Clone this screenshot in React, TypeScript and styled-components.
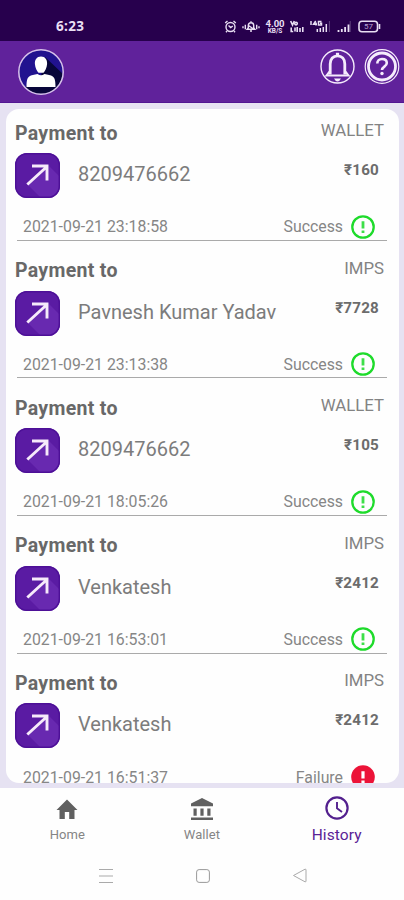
import React from 'react';
import styled, { createGlobalStyle } from 'styled-components';

const GlobalStyle = createGlobalStyle`
  * { box-sizing: border-box; }
  body { margin: 0; background: #fff; font-family: Roboto, "Noto Sans", sans-serif; overflow: hidden; }
  svg { display: block; flex: none; }
`;

const Screen = styled.div`
  width: 404px;
  height: 900px;
  display: flex;
  flex-direction: column;
  background: #fefefe;
  overflow: hidden;
`;

const StatusBar = styled.div`
  height: 41px;
  flex: none;
  display: flex;
  justify-content: space-between;
  padding: 17px 23px 0 56px;
  background: #27004d;
  color: #e9dff3;
`;

const Clock = styled.span`
  font: 700 13.5px/19px "Open Sans", sans-serif;
  letter-spacing: 0.3px;
`;

const StatusIcons = styled.div`
  display: flex;
  align-items: center;
  height: 19px;
`;

const StatusItem = styled.div<{ $gap?: number; $width: number }>`
  width: ${p => p.$width}px;
  margin-left: ${p => p.$gap ?? 0}px;
  flex: none;
`;

const Speed = styled(StatusItem)`
  display: flex;
  flex-direction: column;
  align-items: center;
  font: 700 9.5px/8px Roboto, sans-serif;
`;

const SpeedUnit = styled.span`
  font-size: 6.5px;
  line-height: 6px;
`;

const AppBar = styled.header`
  height: 62px;
  flex: none;
  display: flex;
  justify-content: space-between;
  padding: 7px 4px 0 17px;
  background: #60229b;
  border-bottom: 1px solid #521692;
`;

const BarActions = styled.div`
  display: flex;
  gap: 9px;
`;

const Body = styled.main`
  height: 685px;
  flex: none;
  padding: 6px 5px 5px 6px;
  background: #e6e2f2;
`;

const Card = styled.section`
  height: 674px;
  overflow: hidden;
  border-radius: 13px;
  background: #fefefe;
`;

const Payment = styled.article`
  height: 137.6px;
  display: flex;
  flex-direction: column;
  color: #686868;
`;

const PaymentTop = styled.div`
  height: 104.4px;
  flex: none;
  display: flex;
  justify-content: space-between;
  padding: 11px 15px 0 9px;
`;

const Title = styled.h2`
  margin: 0;
  padding-top: 1.6px;
  font-size: 19.5px;
  line-height: 24px;
  height: 25px;
  font-weight: 700;
  letter-spacing: 0.3px;
  color: #686868;
`;

const Payee = styled.div`
  display: flex;
  align-items: center;
  gap: 18px;
  margin-top: 8px;
  height: 45px;
  white-space: nowrap;
`;

const PayeeName = styled.span`
  padding-bottom: 3px;
  font-size: 20px;
  color: #7c7c7c;
`;

const Amounts = styled.div`
  text-align: right;
`;

const Method = styled.div`
  font-size: 16.8px;
  line-height: 20px;
  color: #838383;
`;

const Amount = styled.div`
  margin: 21px 5px 0 0;
  font-size: 15.2px;
  line-height: 18px;
  font-weight: 700;
  letter-spacing: 0.2px;
  color: #6c6c6c;
`;

const PaymentFoot = styled.div`
  height: 27.5px;
  flex: none;
  display: flex;
  justify-content: space-between;
  align-items: center;
  margin: 0 12px 0 11px;
  padding: 0 12px 0 6px;
  border-bottom: 1.5px solid #aaa;
  font-size: 15.85px;
  color: #868686;
`;

const State = styled.div`
  display: flex;
  align-items: center;
  gap: 8px;
`;

const TabBar = styled.nav`
  height: 63px;
  flex: none;
  display: grid;
  grid-template-columns: repeat(3, 1fr);
`;

const Tab = styled.div<{ $active?: boolean }>`
  display: flex;
  flex-direction: column;
  align-items: center;
  padding-top: ${p => (p.$active ? 8 : 10)}px;
  font-size: ${p => (p.$active ? 15.5 : 13)}px;
  line-height: 18px;
  letter-spacing: 0.1px;
  gap: 6px;
  color: ${p => (p.$active ? '#5a2295' : '#858585')};
`;

const SystemBar = styled.div`
  display: flex;
  align-items: center;
  justify-content: space-between;
  height: 49px;
  padding: 0 97px 0 98px;
`;

const Alarm = () => (
  <svg width="13" height="13" viewBox="0 0 12 13" fill="none" stroke="currentColor" strokeWidth="1.4">
    <circle cx="6" cy="7" r="4.5" /><path d="M.7 3 3 1M11.3 3 9 1M4 5.5l2.2 2L8.3 6M2.5 11l-1 1.3M9.5 11l1 1.3" />
  </svg>
);

const Silent = () => (
  <svg width="18" height="13" viewBox="0 0 18 13" fill="none" stroke="currentColor" strokeWidth="1.4">
    <path d="M5.2 9.2 6.3 7.8V5.500q0-2.700 2.700-2.700t2.700 2.700v2.300l1.100 1.400zM8 11h2M3.300 4.700v4.600M14.700 4.700v4.600M1 6.200v2M17 6.200v2M9 1.200v1.500M6.500 5.500l5 3.500" />
  </svg>
);

const VoLte = () => (
  <svg width="14" height="13" viewBox="0 0 14 13" fill="none" stroke="currentColor" strokeWidth="1.6">
    <path d="m.7 1 1.800 4L4.300 1M7.200 7v5M10 8v4M12.800 7v5M1.200 7.500v4h2M5 7.500v4" /><circle cx="6" cy="3.600" r="1.300" />
  </svg>
);

const MobileData = () => (
  <svg width="20" height="13" viewBox="0 0 20 13" fill="none" stroke="currentColor">
    <path d="M1 1v4M5.700 1 3.500 4.300H7M6 2.500v3M11.500 1.500h-3v3.500h3V3.200H10M7.300 9v3M10.300 8v4M13.300 7v5M16.300 4v8" strokeWidth="1.500" />
    <path d="M19.400 1v11" opacity=".3" />
  </svg>
);

const Signal = () => (
  <svg width="14" height="13" viewBox="0 0 13 13" fill="none" stroke="currentColor" strokeWidth="1.800">
    <path d="M1 10v2M4.300 9v3M7.600 7v5M11 4.500V12" /><path d="M12.700 1v11" strokeWidth="1" opacity=".3" />
  </svg>
);

const BatteryBox = styled(StatusItem)`
  display: grid;
  place-items: center;
  font-size: 8px;
  line-height: 13px;
  color: #b99fd2;
`;

const BatteryShell = styled.svg`
  grid-area: 1 / 1;
  color: #e9dff3;
`;

const BatteryText = styled.span`
  grid-area: 1 / 1;
  padding-right: 2px;
`;

const Battery = () => (
  <BatteryBox $width={23} $gap={7}>
    <BatteryShell width="23" height="13" viewBox="0 0 23 13" fill="none" stroke="currentColor" strokeWidth="1.600">
      <rect x="1" y="1.200" width="18.500" height="10.600" rx="3" /><path d="M21.500 4v5" />
    </BatteryShell>
    <BatteryText>57</BatteryText>
  </BatteryBox>
);

const Avatar = () => (
  <svg width="48" height="48" viewBox="0 0 48 48">
    <defs><clipPath id="avatarDisc"><circle cx="24" cy="24" r="22" /></clipPath></defs>
    <circle cx="24" cy="24" r="22" fill="#21128f" />
    <g clipPath="url(#avatarDisc)"><path d="M28 9 48 28v20H8l1-10 15-10z" fill="#08063a" /></g>
    <circle cx="24" cy="24" r="22.200" fill="none" stroke="#d6c2ea" strokeWidth="1.500" />
    <path d="M24 8.500c4.200 0 6.400 3.200 6.100 7.500-.3 4-2.100 7.200-3.600 8.800h-5c-1.500-1.600-3.300-4.800-3.600-8.800-.3-4.300 1.900-7.500 6.100-7.500z" fill="#fff" />
    <path d="M20.500 26q3.500 2.400 7 0c3.200.8 6.300.9 8.300 2.500 2.200 1.700 2.700 5 2.700 10.500H9.500c0-5.500.5-8.800 2.700-10.500 2-1.600 5.100-1.700 8.300-2.500z" fill="#fff" />
  </svg>
);

const Bell = () => (
  <svg width="35" height="37" viewBox="0 0 35 37" fill="none" stroke="#f5ecfc">
    <circle cx="17.500" cy="18.500" r="16.500" strokeWidth="1.400" />
    <path d="M10.200 26.500V16c0-5 3-8.200 7.300-8.200s7.300 3.200 7.300 8.200v10.500" strokeWidth="2.800" />
    <path d="M9.500 23.500 6.500 27.500h22l-3-4" strokeWidth="2" />
    <path d="M17.500 4.800V8" strokeWidth="3.200" />
    <path d="M14 30.500h7q-1.500 3-3.500 3t-3.500-3z" fill="#f5ecfc" stroke="none" />
  </svg>
);

const Help = () => (
  <svg width="36" height="37" viewBox="0 0 36 37" fill="none" stroke="#f5ecfc">
    <circle cx="18" cy="18.500" r="16.800" strokeWidth="1.200" />
    <circle cx="18" cy="18.500" r="13.500" strokeWidth="2.800" />
    <path d="M13.300 15.500c0-2.800 2-4.500 4.700-4.500 2.800 0 4.800 1.600 4.800 4.100 0 3.600-4.800 3.500-4.800 7" strokeWidth="2.600" />
    <circle cx="18" cy="25.500" r="1.700" fill="#f5ecfc" stroke="none" />
  </svg>
);

const SendIcon = () => (
  <svg width="45" height="45" viewBox="0 0 45 45">
    <rect width="45" height="45" rx="12" fill="#5a1ba3" />
    <path d="M33 12 45 24v9a12 12 0 0 1-12 12H26L12 31z" fill="#6829b0" />
    <rect x=".7" y=".7" width="43.600" height="43.600" rx="11.500" fill="none" stroke="#4d1097" strokeWidth="1.400" />
    <path d="M12.300 31.500 32 13.500M17 13H32v14.500" fill="none" stroke="#f6eafa" strokeWidth="2.900" />
  </svg>
);

const StateIcon = ({ ok }: { ok: boolean }) => (
  <svg width="24" height="24" viewBox="0 0 24 24" fill="none">
    {ok
      ? <circle cx="12" cy="12" r="10.700" stroke="#1edb2b" strokeWidth="2.300" />
      : <circle cx="12" cy="12" r="11.800" fill="#ec1338" />}
    <path d="M12 6.200v7.300M12 15.500v2.400" stroke={ok ? '#3ddf48' : '#fff'} strokeWidth={ok ? 2.8 : 3.2} />
  </svg>
);

const HomeIcon = () => (
  <svg width="22" height="22" viewBox="0 0 22 22" fill="#606060">
    <path d="M11 1.500.5 12h3v9h5.300V14h4.400v7h5.300V12h3z" />
  </svg>
);

const BankIcon = () => (
  <svg width="24" height="22" viewBox="0 0 24 22" fill="#606060">
    <path d="M12 0 1 5.500v2.700h22V5.500zM3.500 10.500h3.200v7.200H3.500zM10.400 10.500h3.200v7.200h-3.200zM17.300 10.500h3.200v7.200h-3.200zM1 19.500h22v3H1z" />
  </svg>
);

const ClockIcon = () => (
  <svg width="24" height="24" viewBox="0 0 24 24" fill="none" stroke="#53208e">
    <circle cx="12" cy="12" r="10.600" strokeWidth="2.200" /><path d="M12 6V12.300l5 3.700" strokeWidth="1.900" />
  </svg>
);

const payments = [
  { name: '8209476662', method: 'WALLET', amount: '₹160', date: '2021-09-21 23:18:58', ok: true },
  { name: 'Pavnesh Kumar Yadav', method: 'IMPS', amount: '₹7728', date: '2021-09-21 23:13:38', ok: true },
  { name: '8209476662', method: 'WALLET', amount: '₹105', date: '2021-09-21 18:05:26', ok: true },
  { name: 'Venkatesh', method: 'IMPS', amount: '₹2412', date: '2021-09-21 16:53:01', ok: true },
  { name: 'Venkatesh', method: 'IMPS', amount: '₹2412', date: '2021-09-21 16:51:37', ok: false },
];

export default function App() {
  return (
    <Screen>
      <GlobalStyle />
      <StatusBar>
        <Clock>6:23</Clock>
        <StatusIcons>
          <StatusItem $width={13}><Alarm /></StatusItem>
          <StatusItem $width={18} $gap={5}><Silent /></StatusItem>
          <Speed $width={20} $gap={5}>4.00<SpeedUnit>KB/S</SpeedUnit></Speed>
          <StatusItem $width={14} $gap={5}><VoLte /></StatusItem>
          <StatusItem $width={20} $gap={6}><MobileData /></StatusItem>
          <StatusItem $width={14} $gap={7}><Signal /></StatusItem>
          <Battery />
        </StatusIcons>
      </StatusBar>
      <AppBar>
        <Avatar />
        <BarActions><Bell /><Help /></BarActions>
      </AppBar>
      <Body>
        <Card>
          {payments.map(p => (
            <Payment key={p.date}>
              <PaymentTop>
                <div>
                  <Title>Payment to</Title>
                  <Payee><SendIcon /><PayeeName>{p.name}</PayeeName></Payee>
                </div>
                <Amounts>
                  <Method>{p.method}</Method>
                  <Amount>{p.amount}</Amount>
                </Amounts>
              </PaymentTop>
              <PaymentFoot>
                <span>{p.date}</span>
                <State>{p.ok ? 'Success' : 'Failure'}<StateIcon ok={p.ok} /></State>
              </PaymentFoot>
            </Payment>
          ))}
        </Card>
      </Body>
      <TabBar>
        <Tab><HomeIcon />Home</Tab>
        <Tab><BankIcon />Wallet</Tab>
        <Tab $active><ClockIcon />History</Tab>
      </TabBar>
      <SystemBar>
        <svg width="16" height="16" viewBox="0 0 16 16" stroke="#aaa"><path d="M1 1.500h14M1 8h14M1 14.500h14" /></svg>
        <svg width="14" height="14" viewBox="0 0 14 14" fill="none" stroke="#999"><rect x=".6" y=".6" width="12.800" height="12.800" rx="2.500" /></svg>
        <svg width="15" height="15" viewBox="0 0 15 15" fill="none" stroke="#aaa" strokeLinejoin="round"><path d="M1.500 7.500 13 1.200q1-.4 1 .8v11q0 1.200-1 .8z" /></svg>
      </SystemBar>
    </Screen>
  );
}
